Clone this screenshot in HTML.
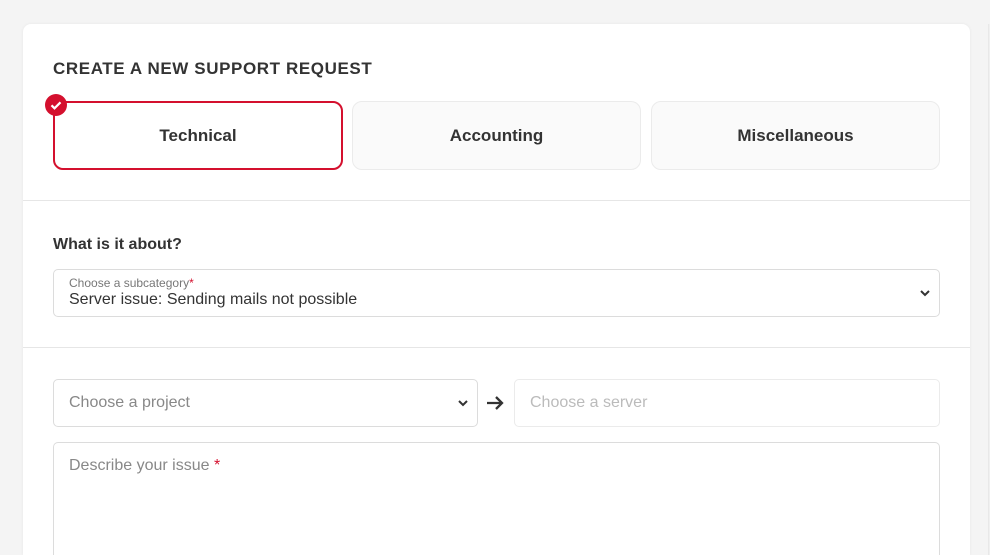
<!DOCTYPE html>
<html><head><style>
*{box-sizing:border-box;margin:0;padding:0}
html,body{width:990px;height:555px;overflow:hidden}
body{background:#f4f4f4;font-family:"Liberation Sans",sans-serif;position:relative}
.card{position:absolute;left:23px;top:24px;width:947px;height:531px;background:#fff;border-radius:8px 8px 0 0;box-shadow:0 0 3px rgba(0,0,0,.06);overflow:hidden}
.side{position:absolute;left:988px;top:24px;width:2px;height:531px;background:#f0f0f0;border-left:1px solid #e8e8e8}
h1{position:absolute;left:30px;top:35px;font-size:17px;font-weight:bold;color:#333;letter-spacing:.6px}
.opt{position:absolute;top:77px;width:289px;height:69px;border:1px solid #ebebeb;background:#fafafa;border-radius:10px;display:flex;align-items:center;justify-content:center;font-size:17px;font-weight:bold;color:#333}
.opt.sel{border:2px solid #d4102e;background:#fff}
.chk{position:absolute;left:22px;top:70px;width:22px;height:22px;border-radius:50%;background:#d4102e}
.hr{position:absolute;left:0;width:947px;height:1px;background:#e6e6e6}
h2{position:absolute;left:30px;top:212px;font-size:16px;font-weight:bold;color:#333}
.inp{position:absolute;border:1px solid #dcdcdc;border-radius:5px;background:#fff}
.lbl{font-size:12px;color:#777}
.r{color:#d4102e}
.ph{font-size:16px;color:#888}
.chev{position:absolute;right:8px;top:50%;margin-top:-4px}
</style></head><body>
<div class="side"></div>
<div class="card">
<h1>CREATE A NEW SUPPORT REQUEST</h1>
<div class="opt sel" style="left:30px;width:290px">Technical</div>
<div class="chk"><svg width="22" height="22" viewBox="0 0 22 22"><path d="M6.5 11.3l3 3 6-6" stroke="#fff" stroke-width="2.2" fill="none"/></svg></div>
<div class="opt" style="left:329px">Accounting</div>
<div class="opt" style="left:628px">Miscellaneous</div>
<div class="hr" style="top:176px"></div>
<h2>What is it about?</h2>
<div class="inp" style="left:30px;top:245px;width:887px;height:48px;padding:6px 15px">
<div class="lbl">Choose a subcategory<span class="r">*</span></div>
<div style="font-size:16px;color:#333;margin-top:1px">Server issue: Sending mails not possible</div>
<svg class="chev" width="12" height="8" viewBox="0 0 12 8"><path d="M2 2l4 4 4-4" stroke="#333" stroke-width="2" fill="none"/></svg>
</div>
<div class="hr" style="top:323px"></div>
<div class="inp" style="left:30px;top:355px;width:425px;height:48px;padding:14px 15px"><span class="ph">Choose a project</span>
<svg class="chev" width="12" height="8" viewBox="0 0 12 8"><path d="M2 2l4 4 4-4" stroke="#333" stroke-width="2" fill="none"/></svg></div>
<svg style="position:absolute;left:463px;top:371px" width="18" height="16" viewBox="0 0 18 16"><path d="M1 8h15M10 2l6 6-6 6" stroke="#333" stroke-width="2.3" fill="none"/></svg>
<div class="inp" style="left:491px;top:355px;width:426px;height:48px;padding:14px 15px;border-color:#ebebeb"><span class="ph" style="color:#bbb">Choose a server</span></div>
<div class="inp" style="left:30px;top:418px;width:887px;height:120px;padding:14px 15px;border-bottom:none;border-radius:5px 5px 0 0"><span class="ph">Describe your issue</span><span class="r"> *</span></div>
</div>
</body></html>
